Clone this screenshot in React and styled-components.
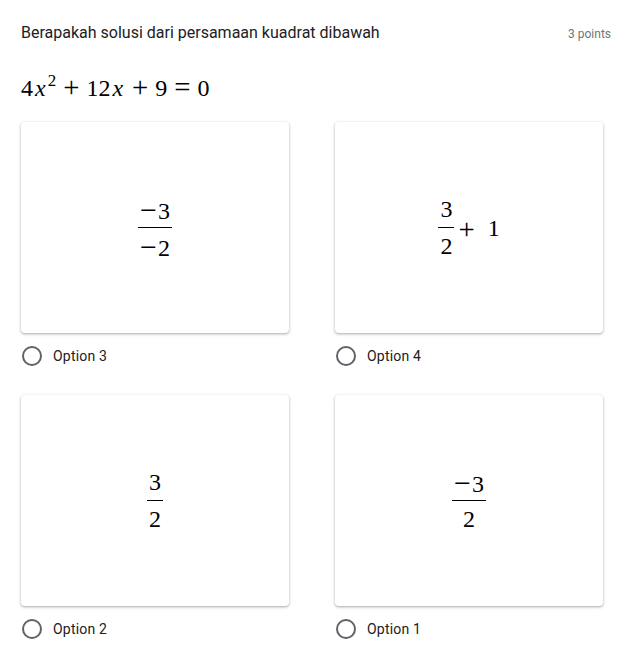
import React from "react";
import styled, { createGlobalStyle } from "styled-components";

const Global = createGlobalStyle`
  html, body { margin: 0; padding: 0; background: #fff; }
  body { font-family: Roboto, "Noto Sans", Arial, sans-serif; color: #202124; }
`;

const serif = `"Liberation Serif", "Times New Roman", Times, serif`;

const Page = styled.div`
  width: 631px;
  box-sizing: border-box;
  padding: 21px 20px 0 21px;
`;

const Header = styled.div`
  display: flex;
  justify-content: space-between;
  align-items: baseline;
`;

const Title = styled.div`
  font-size: 16px;
  line-height: 24px;
  color: #202124;
`;

const Points = styled.div`
  font-size: 12px;
  line-height: 24px;
  color: #70757a;
`;

const Equation = styled.div`
  margin-top: 26px;
  font-family: ${serif};
  font-size: 24px;
  line-height: 32px;
  height: 32px;
  color: #000;
  white-space: nowrap;
`;

const Var = styled.i`
  font-style: italic;
  margin: 0 2px 0 2px;
`;

const Sup = styled.sup`
  font-size: 17px;
  line-height: 0;
  vertical-align: 0;
  position: relative;
  top: -10px;
`;

const Op = styled.span`
  display: inline-block;
  font-size: 1.2em;
  line-height: 0;
  position: relative;
  top: 1px;
  margin: ${(p) => p.$margin || "0 7px"};
`;

const Grid = styled.div`
  margin-top: 18px;
  width: 582px;
  display: grid;
  grid-template-columns: 268px 268px;
  column-gap: 46px;
  row-gap: 28px;
`;

const Item = styled.div`
  display: flex;
  flex-direction: column;
`;

const Card = styled.div`
  height: 211px;
  background: #fff;
  border-radius: 4px;
  box-shadow: 0 1px 2px 0 rgba(60, 64, 67, 0.3), 0 1px 3px 1px rgba(60, 64, 67, 0.12);
  display: flex;
  align-items: center;
  justify-content: center;
  font-family: ${serif};
  font-size: 24px;
  color: #000;
`;

const MathRow = styled.div`
  display: inline-flex;
  align-items: center;
  line-height: 24px;
`;

const Frac = styled.span`
  display: inline-flex;
  flex-direction: column;
  align-items: center;
`;

const Part = styled.span`
  display: block;
  height: 24px;
  line-height: 24px;
  padding: 0 2px;
  white-space: nowrap;
`;

const Bar = styled.span`
  display: block;
  align-self: stretch;
  height: 1px;
  background: #000;
  margin: 6px 0;
`;

const Minus = styled.span`
  font-size: 1.25em;
  position: relative;
  top: 1px;
  margin-right: 1px;
`;

const RadioRow = styled.label`
  margin-top: 12px;
  height: 22px;
  display: flex;
  align-items: center;
  cursor: pointer;
`;

const Circle = styled.span`
  width: 20px;
  height: 20px;
  box-sizing: border-box;
  border: 2px solid #5f6368;
  border-radius: 50%;
  margin-left: 1px;
  flex: none;
`;

const Label = styled.span`
  margin-left: 11px;
  font-size: 14px;
  line-height: 20px;
  color: #202124;
  letter-spacing: 0.2px;
`;

const M = () => <Minus>−</Minus>;

const options = [
  {
    label: "Option 3",
    math: (
      <Frac>
        <Part><M />3</Part>
        <Bar />
        <Part><M />2</Part>
      </Frac>
    ),
  },
  {
    label: "Option 4",
    math: (
      <MathRow>
        <Frac>
          <Part>3</Part>
          <Bar />
          <Part>2</Part>
        </Frac>
        <Op $margin="0 13px 0 4px">+</Op>
        <span>1</span>
      </MathRow>
    ),
  },
  {
    label: "Option 2",
    math: (
      <Frac>
        <Part>3</Part>
        <Bar />
        <Part>2</Part>
      </Frac>
    ),
  },
  {
    label: "Option 1",
    math: (
      <Frac>
        <Part><M />3</Part>
        <Bar />
        <Part>2</Part>
      </Frac>
    ),
  },
];

export default function App() {
  return (
    <Page>
      <Global />
      <Header>
        <Title>Berapakah solusi dari persamaan kuadrat dibawah</Title>
        <Points>3 points</Points>
      </Header>
      <Equation>
        4<Var>x</Var>
        <Sup>2</Sup>
        <Op>+</Op>12<Var>x</Var>
        <Op>+</Op>9<Op>=</Op>0
      </Equation>
      <Grid>
        {options.map((o) => (
          <Item key={o.label}>
            <Card>{o.math}</Card>
            <RadioRow>
              <Circle />
              <Label>{o.label}</Label>
            </RadioRow>
          </Item>
        ))}
      </Grid>
    </Page>
  );
}
